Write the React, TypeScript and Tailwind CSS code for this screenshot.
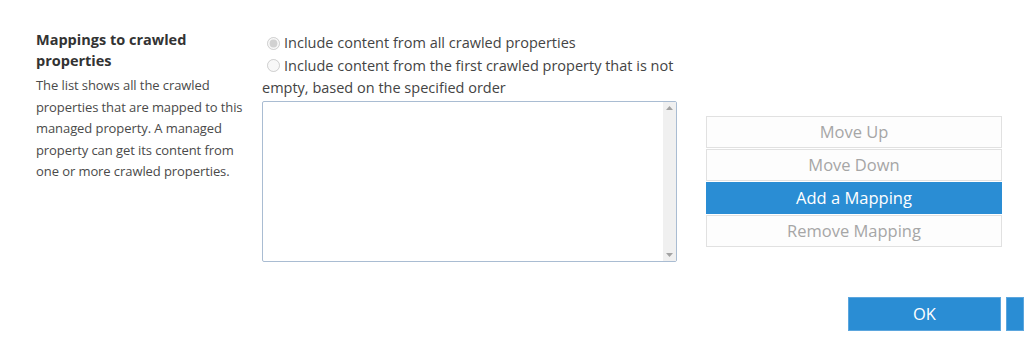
import React, { useState } from "react";

const font = { fontFamily: '"Segoe UI", "Open Sans", "Noto Sans", sans-serif' };

export default function App() {
  const [mode, setMode] = useState("all");

  return (
    <div className="h-[363px] w-[1024px] overflow-hidden bg-white text-[#444]" style={font}>
      <div className="flex pt-[29px]">
        {/* left description */}
        <div className="ml-[36px] w-[206px] shrink-0">
          <h3 className="text-[14.5px] font-bold leading-[21px] text-[#333]">
            Mappings to crawled properties
          </h3>
          <p className="mt-[4px] whitespace-nowrap text-[13px] leading-[21.6px] tracking-[-0.08px] text-[#4a4a4a]">
            The list shows all the crawled
            <br />
            properties that are mapped to this
            <br />
            managed property. A managed
            <br />
            property can get its content from
            <br />
            one or more crawled properties.
          </p>
        </div>

        {/* radios + list */}
        <div className="ml-[20px] mt-[3px] w-[416px] shrink-0">
          <label className="flex items-center text-[14.5px] leading-[22px]">
            <input
              type="radio"
              name="mode"
              disabled
              checked={mode === "all"}
              onChange={() => setMode("all")}
              className="mr-[4px] ml-[5px] h-[13px] w-[13px] accent-[#aaa]"
            />
            Include content from all crawled properties
          </label>
          <label className="mt-[1px] block text-[14.5px] leading-[22px]">
            <input
              type="radio"
              name="mode"
              disabled
              checked={mode === "first"}
              onChange={() => setMode("first")}
              className="relative top-[1px] mr-[4px] ml-[5px] h-[13px] w-[13px]"
            />
            Include content from the first crawled property that is not empty,
            based on the specified order
          </label>
          <div className="mt-[2px] flex h-[161px] w-[415px] rounded-[2px] border border-[#a9bcd2]">
            <div className="flex-1" />
            <div className="flex w-[13px] flex-col items-center justify-between bg-[#f0f0f0] py-[4px]">
              <svg width="7" height="4" viewBox="0 0 7 4">
                <path d="M0 4 L3.5 0 L7 4 Z" fill="#a3a3a3" />
              </svg>
              <svg width="7" height="4" viewBox="0 0 7 4">
                <path d="M0 0 L3.5 4 L7 0 Z" fill="#a3a3a3" />
              </svg>
            </div>
          </div>
        </div>

        {/* action buttons */}
        <div className="ml-[28px] mt-[87px] flex w-[296px] flex-col gap-px">
          <button className="h-[32px] border border-[#e1e1e1] bg-[#fdfdfd] text-[16.5px] text-[#a6a6a6]">
            Move Up
          </button>
          <button className="h-[32px] border border-[#e1e1e1] bg-[#fdfdfd] text-[16.5px] text-[#a6a6a6]">
            Move Down
          </button>
          <button className="h-[32px] border border-[#2a8dd4] bg-[#2a8dd4] text-[16.5px] text-white">
            Add a Mapping
          </button>
          <button className="h-[32px] border border-[#e1e1e1] bg-[#fdfdfd] text-[16.5px] text-[#a6a6a6]">
            Remove Mapping
          </button>
        </div>
      </div>

      {/* footer buttons */}
      <div className="mt-[35px] flex justify-end gap-[5px]">
        <button className="h-[34px] w-[153px] border border-[#5ba6de] bg-[#2a8dd4] text-[16.5px] text-white">
          OK
        </button>
        <button className="h-[34px] w-[18px] border border-[#5ba6de] bg-[#2a8dd4]" />
      </div>
    </div>
  );
}
